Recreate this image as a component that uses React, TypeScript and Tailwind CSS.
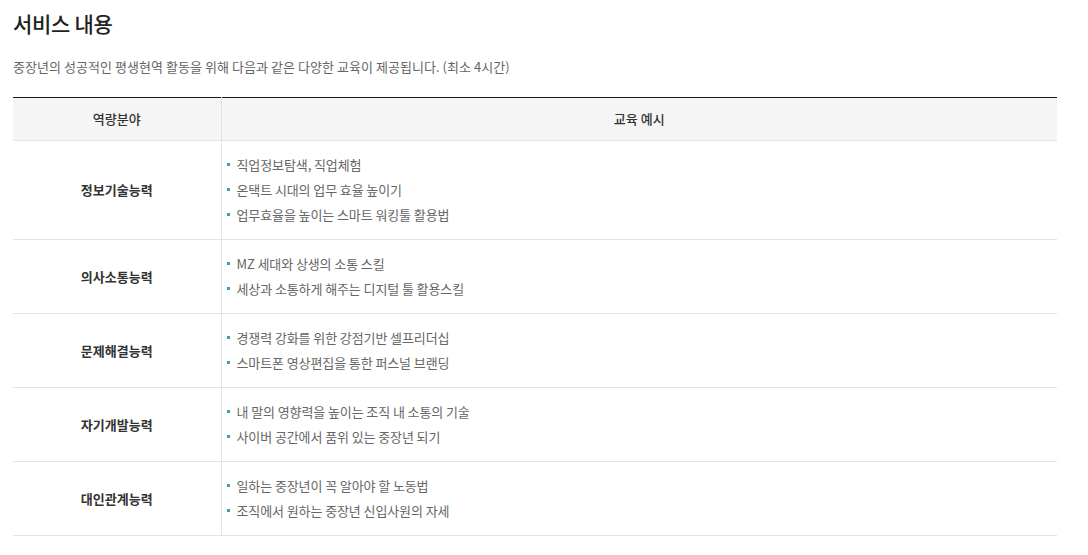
const ROWS = [
  { area: '정보기술능력', items: ['직업정보탐색, 직업체험', '온택트 시대의 업무 효율 높이기', '업무효율을 높이는 스마트 워킹툴 활용법'] },
  { area: '의사소통능력', items: ['MZ 세대와 상생의 소통 스킬', '세상과 소통하게 해주는 디지털 툴 활용스킬'] },
  { area: '문제해결능력', items: ['경쟁력 강화를 위한 강점기반 셀프리더십', '스마트폰 영상편집을 통한 퍼스널 브랜딩'] },
  { area: '자기개발능력', items: ['내 말의 영향력을 높이는 조직 내 소통의 기술', '사이버 공간에서 품위 있는 중장년 되기'] },
  { area: '대인관계능력', items: ['일하는 중장년이 꼭 알아야 할 노동법', '조직에서 원하는 중장년 신입사원의 자세'] },
]

export default function App() {
  return (
    <div className="w-[1088px] h-[555px] bg-white overflow-hidden font-['Noto_Sans_CJK_KR','Noto_Sans',sans-serif]">
      <div className="pl-[13px] pr-[31px] pt-[7px]">
        <h2 className="text-[21px] leading-[32px] font-medium text-[#222] tracking-[-0.3px]">서비스 내용</h2>
        <p className="mt-[12px] text-[13px] leading-[32px] text-[#666] tracking-[0.05px]">
          중장년의 성공적인 평생현역 활동을 위해 다음과 같은 다양한 교육이 제공됩니다. (최소 4시간)
        </p>

        <table className="mt-[14px] w-full border-collapse border-t border-[#111a1c] text-[13px]">
          <thead>
            <tr className="bg-[#f5f5f5] border-b border-[#e4e4e4]">
              <th className="w-[208px] h-[43px] border-r border-[#e4e4e4] font-medium text-[#333] text-center">역량분야</th>
              <th className="h-[43px] font-medium text-[#333] text-center">교육 예시</th>
            </tr>
          </thead>
          <tbody>
            {ROWS.map(row => (
              <tr key={row.area} className="border-b border-[#e4e4e4]">
                <td className="w-[208px] border-r border-[#e4e4e4] text-center font-bold text-[#333]">{row.area}</td>
                <td className="pl-[5px] pt-[11px] pb-[12px]">
                  <ul>
                    {row.items.map(item => (
                      <li key={item} className="flex items-center text-[13px] leading-[25px] text-[#666] tracking-[-0.1px]">
                        <span className="w-[3px] h-[3px] bg-[#3a9fb5] mr-[7px] shrink-0" />
                        {item}
                      </li>
                    ))}
                  </ul>
                </td>
              </tr>
            ))}
          </tbody>
        </table>
      </div>
    </div>
  )
}
